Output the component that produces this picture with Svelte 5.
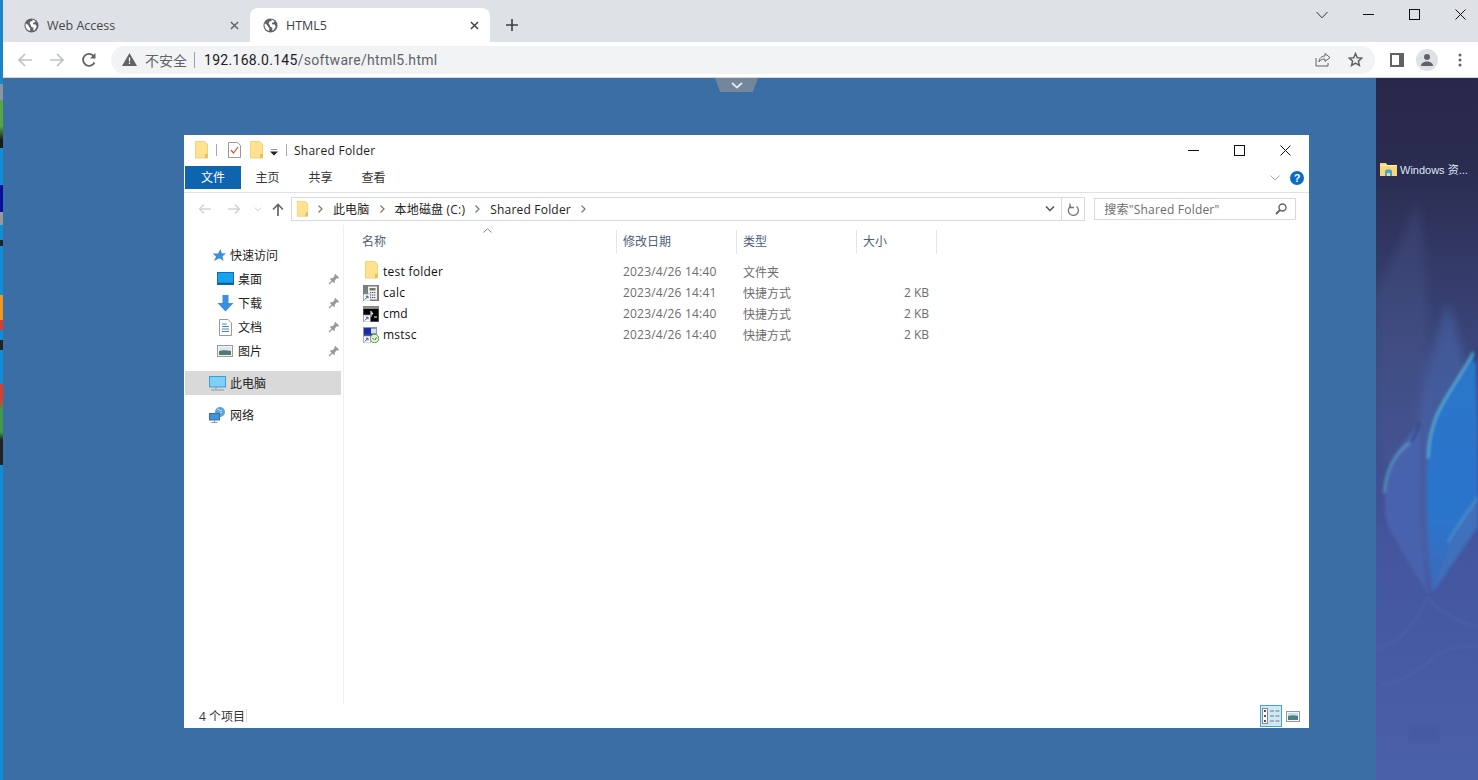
<script lang="ts">
  const navItems = [
    { key: 'desktop', label: '桌面' },
    { key: 'download', label: '下载' },
    { key: 'docs', label: '文档' },
    { key: 'pics', label: '图片' },
  ];

  const files = [
    { icon: 'folder', name: 'test folder', date: '2023/4/26 14:40', type: '文件夹', size: '' },
    { icon: 'calc', name: 'calc', date: '2023/4/26 14:41', type: '快捷方式', size: '2 KB' },
    { icon: 'cmd', name: 'cmd', date: '2023/4/26 14:40', type: '快捷方式', size: '2 KB' },
    { icon: 'mstsc', name: 'mstsc', date: '2023/4/26 14:40', type: '快捷方式', size: '2 KB' },
  ];

  const columns = [
    { label: '名称', width: 261 },
    { label: '修改日期', width: 120 },
    { label: '类型', width: 120 },
    { label: '大小', width: 80 },
  ];

  const crumbs = ['此电脑', '本地磁盘 (C:)', 'Shared Folder'];
</script>

{#snippet globe()}
  <svg class="globe" viewBox="0 0 16 16">
    <circle cx="8" cy="8" r="7.500" fill="#5f6368" />
    <path d="M2 5.500 5 8l.3 1.600 1.400.8-.2 3.400C4 13.400 1.800 11 1.600 8c0-.9.1-1.700.4-2.500zM9 1.700l3.300 1.500-1 1.600-1.600.2-.2 1.600 3 .4 1 2.400-2 3.400-1.700.6.300-3-2.300-1.200-.7-2L6 6l.6-2.300L9 3.500z" fill="#fff" />
  </svg>
{/snippet}

{#snippet folder(w = 13, h = 18)}
  <svg width={w} height={h} viewBox="0 0 13 18">
    <path d="M.5.500h9l3 2.500v14H.5z" fill="#ffe28f" stroke="#efd27a" />
    <path d="M10 13h2.500v4H10z" fill="#e5bf55" />
  </svg>
{/snippet}

{#snippet pin()}
  <svg class="pin" width="12" height="12" viewBox="0 0 12 12">
    <path d="M7.200.8 11.200 4.800 10 5.600 9 5.300 6.800 7.500 6.800 9.600 5.800 10 2 6.200 2.400 5.200 4.500 5.200 6.700 3 6.400 2z" fill="#9a9a9a" />
    <path d="M4 8 1 11" stroke="#9a9a9a" stroke-width="1.200" />
  </svg>
{/snippet}

{#snippet shortcut()}
  <rect x=".3" y="9" width="7" height="7" fill="#fff" stroke="#8a8a8a" stroke-width=".6" />
  <path d="M1.800 14.500 4.500 11.800M2.800 11.200h2.200v2.200" stroke="#1f4fa8" stroke-width="1" fill="none" />
{/snippet}

{#snippet fileIcon(kind: string)}
  {#if kind === 'folder'}
    <span class="file-folder">{@render folder(13, 18)}</span>
  {:else if kind === 'calc'}
    <svg width="16" height="16" viewBox="0 0 16 16">
      <rect width="16" height="16" fill="#7d7d7d" />
      <rect x="5" y="1.500" width="9" height="13" fill="#f2f2f2" />
      <rect x="6.500" y="3" width="6" height="2.500" fill="#777" />
      <path d="M7 7.500h1.300M9 7.500h1.300M11 7.500h1.300M7 10h1.300M9 10h1.300M11 10h1.300M7 12.500h1.300M9 12.500h1.300M11 12.500h1.300" stroke="#555" />
      {@render shortcut()}
    </svg>
  {:else if kind === 'cmd'}
    <svg width="16" height="16" viewBox="0 0 16 16">
      <rect width="16" height="16" fill="#8a8a8a" />
      <rect x=".5" y="3" width="15" height="12.500" fill="#050505" />
      <path d="M8 5.500l2 2.500-2 0M8 5v6M11 11h3" stroke="#fff" stroke-width="1" fill="none" />
      {@render shortcut()}
    </svg>
  {:else}
    <svg width="16" height="16" viewBox="0 0 16 16">
      <rect width="14" height="13" fill="#8c98ad" />
      <rect x="1" y="1" width="7" height="6" fill="#1c2fa6" />
      <path d="M1 7h11v4H1z" fill="#30469e" />
      <path d="M8 2h5v4H8z" fill="#d8dfef" />
      <circle cx="11.500" cy="11.500" r="4.300" fill="#dff0d0" stroke="#4f9a3a" />
      <path d="M9.500 11l1.300 1.500M13.500 10.500 12 13" stroke="#2f7f2b" stroke-width="1" />
      {@render shortcut()}
    </svg>
  {/if}
{/snippet}

{#snippet navIcon(kind: string)}
  {#if kind === 'desktop'}
    <svg width="17" height="14" viewBox="0 0 17 14">
      <rect x=".5" y=".5" width="16" height="12" fill="#19a0ee" stroke="#0f6fb5" />
      <path d="M1 11.500h15" stroke="#0b5c97" stroke-width="1.500" />
    </svg>
  {:else if kind === 'download'}
    <svg width="17" height="17" viewBox="0 0 17 17">
      <path d="M5.500 0h6v8H16.500L8.500 16.500.5 8h5z" fill="#3c8fe0" />
    </svg>
  {:else if kind === 'docs'}
    <svg width="13" height="17" viewBox="0 0 13 17">
      <path d="M.5.500h8.500l3.500 3.500v12.500H.5z" fill="#fff" stroke="#9a9a9a" />
      <path d="M3 5h5M3 7.500h7M3 10h7M3 12.500h7" stroke="#4a86c8" />
    </svg>
  {:else}
    <svg width="16" height="12" viewBox="0 0 16 12">
      <rect x=".5" y=".5" width="15" height="11" fill="#f4f4f4" stroke="#9c9c9c" />
      <rect x="2" y="2" width="12" height="4" fill="#dbe9ee" />
      <path d="M2 6c3-1 8-1 12 0v4H2z" fill="#527a72" />
    </svg>
  {/if}
{/snippet}

<div class="page">
  <div class="edge"></div>
  <div class="browser">
    <header class="tabstrip">
      <div class="tab">
        {@render globe()}
        <span class="tab-title">Web Access</span>
        <svg class="tab-close" viewBox="0 0 10 10"><path d="M1 1l8 8M9 1 1 9" stroke="#5f6368" stroke-width="1.600" /></svg>
      </div>
      <div class="tab active">
        {@render globe()}
        <span class="tab-title">HTML5</span>
        <svg class="tab-close" viewBox="0 0 10 10"><path d="M1 1l8 8M9 1 1 9" stroke="#3c4043" stroke-width="1.600" /></svg>
      </div>
      <svg class="new-tab" viewBox="0 0 12 12"><path d="M6 0v12M0 6h12" stroke="#3c4043" stroke-width="1.600" /></svg>
      <div class="win-controls">
        <svg width="12" height="8" viewBox="0 0 12 8"><path d="M.5 1 6 6.800 11.500 1" stroke="#333" fill="none" /></svg>
        <svg width="11" height="11" viewBox="0 0 11 11"><path d="M0 5.500h11" stroke="#111" /></svg>
        <svg width="11" height="11" viewBox="0 0 11 11"><rect x=".5" y=".5" width="10" height="10" stroke="#111" fill="none" /></svg>
        <svg width="11" height="11" viewBox="0 0 11 11"><path d="M.5.500l10 10M10.500.500l-10 10" stroke="#111" /></svg>
      </div>
    </header>

    <div class="toolbar">
      <svg class="tb-icon" viewBox="0 0 16 16"><path d="M15 8H2M8 2 2 8l6 6" stroke="#bdc1c6" stroke-width="1.700" fill="none" /></svg>
      <svg class="tb-icon" viewBox="0 0 16 16"><path d="M1 8h13M8 2l6 6-6 6" stroke="#bdc1c6" stroke-width="1.700" fill="none" /></svg>
      <svg class="tb-icon" viewBox="0 0 16 16"><path d="M13.500 10.500A6 6 0 1 1 13 4.500" stroke="#5f6368" stroke-width="1.800" fill="none" /><path d="M14.500 1v5.500H9z" fill="#5f6368" /></svg>
      <div class="omnibox">
        <svg width="15" height="13" viewBox="0 0 15 13"><path d="M7.500 0 15 13H0z" fill="#5f6368" /><path d="M7.500 4.500v4M7.500 9.500v1.500" stroke="#fff" stroke-width="1.300" /></svg>
        <span class="insecure">不安全</span>
        <span class="sep"></span>
        <span class="url">192.168.0.145<span class="url-path">/software/html5.html</span></span>
        <span class="spacer"></span>
        <svg class="omni-share" width="16" height="15" viewBox="0 0 16 15"><path d="M1 6v8h12v-3" stroke="#5f6368" fill="none" /><path d="M4 10c0-4 3-6 6-6V1.500l5 4-5 4V7c-3 0-5 1-6 3z" stroke="#5f6368" fill="none" /></svg>
        <svg class="omni-star" width="15" height="15" viewBox="0 0 15 15"><path d="M7.500 1.500 9.300 5.700l4.500.4-3.400 3 1 4.400-3.900-2.300-3.900 2.300 1-4.400-3.400-3 4.500-.4z" stroke="#5f6368" stroke-width="1.500" fill="none" /></svg>
      </div>
      <div class="tb-right">
        <svg width="14" height="14" viewBox="0 0 14 14"><rect width="14" height="14" fill="#5f6368" /><rect x="2" y="2" width="7" height="10" fill="#fff" /></svg>
        <span class="avatar"><svg width="14" height="14" viewBox="0 0 14 14"><circle cx="7" cy="4" r="3" fill="#5f6368" /><path d="M1 13c0-3 3-4.500 6-4.500s6 1.500 6 4.500z" fill="#5f6368" /></svg></span>
        <svg width="4" height="14" viewBox="0 0 4 14"><circle cx="2" cy="2" r="1.500" fill="#5f6368" /><circle cx="2" cy="7" r="1.500" fill="#5f6368" /><circle cx="2" cy="12" r="1.500" fill="#5f6368" /></svg>
      </div>
    </div>

    <main class="remote">
      <div class="handle">
        <svg width="12" height="7" viewBox="0 0 12 7"><path d="M1 1l5 4.500L11 1" stroke="#dfe7f0" stroke-width="1.800" fill="none" /></svg>
      </div>

      <section class="explorer">
        <div class="titlebar">
          {@render folder(13, 18)}
          <span class="qa-sep"></span>
          <svg width="13" height="16" viewBox="0 0 13 16"><path d="M.5.500h9l3 3v12H.5z" fill="#fff" stroke="#999" /><path d="M3 8l2.500 3L10 5" stroke="#d9532c" stroke-width="1.200" fill="none" /></svg>
          <span class="qa-folder">{@render folder(13, 18)}</span>
          <svg class="qa-drop" width="8" height="7" viewBox="0 0 8 7"><path d="M1 0h6" stroke="#222" /><path d="M0 2.500h8L4 6.500z" fill="#222" /></svg>
          <span class="qa-sep"></span>
          <span class="win-title">Shared Folder</span>
          <div class="ex-controls">
            <svg width="11" height="11" viewBox="0 0 11 11"><path d="M0 5.500h11" stroke="#111" /></svg>
            <svg width="11" height="11" viewBox="0 0 11 11"><rect x=".5" y=".5" width="10" height="10" stroke="#111" fill="none" /></svg>
            <svg width="11" height="11" viewBox="0 0 11 11"><path d="M.5.500l10 10M10.500.500l-10 10" stroke="#111" /></svg>
          </div>
        </div>

        <div class="ribbon">
          <span class="rib-tab file">文件</span>
          <span class="rib-tab">主页</span>
          <span class="rib-tab">共享</span>
          <span class="rib-tab">查看</span>
          <span class="spacer"></span>
          <svg width="10" height="6" viewBox="0 0 10 6"><path d="M.5.500 5 5 9.500.500" stroke="#aaa" fill="none" /></svg>
          <span class="help">?</span>
        </div>

        <div class="addrrow">
          <svg class="ar" width="14" height="12" viewBox="0 0 14 12"><path d="M13 6H2M6 1.500 1.500 6 6 10.500" stroke="#d4d4d4" stroke-width="1.500" fill="none" /></svg>
          <svg class="ar" width="14" height="12" viewBox="0 0 14 12"><path d="M1 6h11M8 1.500 12.500 6 8 10.500" stroke="#d4d4d4" stroke-width="1.500" fill="none" /></svg>
          <svg class="ar small" width="8" height="5" viewBox="0 0 8 5"><path d="M.5.500 4 4 7.500.500" stroke="#d4d4d4" fill="none" /></svg>
          <svg class="ar" width="12" height="13" viewBox="0 0 12 13"><path d="M6 13V2M1 6.500 6 1.500l5 5" stroke="#666" stroke-width="1.700" fill="none" /></svg>
          <div class="addrbox">
            <span class="addr-folder">{@render folder(13, 18)}</span>
            {#each crumbs as crumb}
              <svg class="crumb-arrow" width="5" height="8" viewBox="0 0 5 8"><path d="M.5.500 4 4 .5 7.500" stroke="#777" stroke-width="1.200" fill="none" /></svg>
              <span class="crumb">{crumb}</span>
            {/each}
            <svg class="crumb-arrow" width="5" height="8" viewBox="0 0 5 8"><path d="M.5.500 4 4 .5 7.500" stroke="#777" stroke-width="1.200" fill="none" /></svg>
            <span class="spacer"></span>
            <svg class="addr-drop" width="10" height="6" viewBox="0 0 10 6"><path d="M1 .500 5 4.500 9 .500" stroke="#555" stroke-width="1.500" fill="none" /></svg>
            <span class="refresh">
              <svg width="12" height="13" viewBox="0 0 12 13"><path d="M9.500 3.500A5 5 0 1 1 4 3" stroke="#777" stroke-width="1.300" fill="none" /><path d="M3 .500v4h4" stroke="#777" stroke-width="1.300" fill="none" /></svg>
            </span>
          </div>
          <div class="searchbox">
            <span>搜索"Shared Folder"</span>
            <svg width="12" height="12" viewBox="0 0 12 12"><circle cx="7.500" cy="4.500" r="3.500" stroke="#666" stroke-width="1.400" fill="none" /><path d="M5 7 1 11" stroke="#666" stroke-width="2" /></svg>
          </div>
        </div>

        <div class="body">
          <nav class="navpane">
            <div class="nav-row top">
              <svg class="star" width="14" height="14" viewBox="0 0 14 14"><path d="M8.500 1 9.700 5.300 14 5.500 10.500 8.300 11.500 13 7.500 10.300 2 13 4 8.500 .500 5.500 6 5.500z" fill="#3b8fd6" /></svg>
              <span>快速访问</span>
            </div>
            {#each navItems as item}
              <div class="nav-row sub">
                <span class="nav-ico">{@render navIcon(item.key)}</span>
                <span>{item.label}</span>
                <span class="spacer"></span>
                {@render pin()}
              </div>
            {/each}
            <div class="nav-row top selected">
              <svg width="17" height="15" viewBox="0 0 17 15"><rect x=".5" y=".5" width="16" height="10.500" fill="#7fd0f5" stroke="#3b9ed6" /><path d="M7 11v2M2 14h13" stroke="#8a97a5" stroke-width="1.200" /></svg>
              <span>此电脑</span>
            </div>
            <div class="nav-row top net">
              <svg width="17" height="16" viewBox="0 0 17 16"><circle cx="11" cy="5" r="5" fill="#5ea4d8" /><path d="M8 2c2 .5 3 2 5 1.500M9 8c1-2 3-2 4-3" stroke="#c4e3f6" fill="none" /><rect x=".5" y="6.500" width="10" height="6.500" fill="#3f93d8" stroke="#2b74b0" /><path d="M5.500 13v2M2.500 15.500h6" stroke="#8a97a5" /></svg>
              <span>网络</span>
            </div>
          </nav>

          <div class="listpane">
            <svg class="sort" width="9" height="5" viewBox="0 0 9 5"><path d="M.5 4.500 4.500.700l4 3.800" stroke="#888" fill="none" /></svg>
            <div class="colhead">
              {#each columns as col}
                <span class="col" style:width="{col.width}px">{col.label}</span>
              {/each}
            </div>
            <div class="rows">
              {#each files as file}
                <div class="row">
                  <span class="cell name">
                    <span class="file-ico">{@render fileIcon(file.icon)}</span>
                    {file.name}
                  </span>
                  <span class="cell meta latin">{file.date}</span>
                  <span class="cell meta">{file.type}</span>
                  <span class="cell meta size">{file.size}</span>
                </div>
              {/each}
            </div>
          </div>
        </div>

        <footer class="status">
          <span class="count">4 个项目</span>
          <span class="status-sep"></span>
          <span class="spacer"></span>
          <span class="view on">
            <svg width="18" height="16" viewBox="0 0 18 16">
              <rect x=".5" y=".5" width="5" height="15" fill="#fff" stroke="#888" />
              <path d="M2 3h2M2 8h2M2 13h2" stroke="#555" stroke-width="2" />
              <path d="M8 3h4M13.500 3h4M8 8h4M13.500 8h4M8 13h4M13.500 13h4" stroke="#777" />
            </svg>
          </span>
          <span class="view">
            <svg width="14" height="11" viewBox="0 0 14 11"><rect x=".5" y=".5" width="13" height="10" fill="#f4f4f4" stroke="#999" /><rect x="2" y="2" width="10" height="3" fill="#bfe0f2" /><path d="M2 5c3-1 7-1 10 0v4H2z" fill="#4f7f80" /></svg>
          </span>
        </footer>
      </section>

      <aside class="wallpaper">
        <svg class="flames" viewBox="0 0 102 701" preserveAspectRatio="none">
          <defs>
            <linearGradient id="fl" x1="0" y1="0" x2="0" y2="1">
              <stop offset="0" stop-color="#2a76c8" />
              <stop offset=".7" stop-color="#2c74cc" />
              <stop offset="1" stop-color="#3e68b8" />
            </linearGradient>
            <filter id="soft"><feGaussianBlur stdDeviation="1.500" /></filter>
            <filter id="softer"><feGaussianBlur stdDeviation="5" /></filter>
          </defs>
          <g filter="url(#softer)">
            <path d="M41 121C30 160 10 190 0 215v140c14 40 32 90 46 130 4-90 8-190 6-250C51 190 46 150 41 121z" fill="#57699f" opacity=".22" />
            <path d="M72 224C60 260 46 300 44 344c-2 60 2 120 8 170 10-50 22-90 50-130V330C92 290 80 250 72 224z" fill="#4f74c2" opacity=".42" />
          </g>
          <g filter="url(#soft)">
            <path d="M43 344C34 358 20 368 14 390 6 415 6 445 20 461c10 20 22 38 32 53-6-40-10-80-8-110 0-20 2-40-1-60z" fill="#4a62ad" />
            <path d="M100 271C85 300 70 315 60 340c-8 20-10 50-9 75 0 35 3 70 5 99 8-20 22-40 46-96z" fill="url(#fl)" />
            <path d="M57 514c8-30 24-68 45-96v30c-16 24-32 46-45 66z" fill="#3f6fbc" />
            <path d="M97 274C85 298 70 315 60 338c-6 16-8 28-8 42" stroke="#5fc0dc" stroke-width="2.200" fill="none" opacity=".85" />
            <path d="M100 270l-2 14" stroke="#23406f" stroke-width="2" />
            <path d="M34 364c-8 6-14 12-19 22-4 8-6 18-7 28" stroke="#5ec0d4" stroke-width="1.800" fill="none" opacity=".7" />
            <path d="M43 344c-1 8-4 14-8 20" stroke="#2c4478" stroke-width="2" fill="none" />
            <path d="M102 418C92 434 80 448 72 464" stroke="#66b8cc" stroke-width="1.500" fill="none" opacity=".6" />
          </g>
          <path d="M0 570c18-5 36-15 51-52M5 606c20-2 40-15 55-30 12-6 26-10 42-8M52 518c10 15 30 25 50 30" stroke="#6a7fb8" stroke-width="1.500" fill="none" opacity=".25" filter="url(#soft)" />
          <rect x="32" y="646" width="32" height="18" fill="#44579a" opacity=".4" filter="url(#soft)" />
        </svg>
        <div class="desk-label">
          <svg width="17" height="14" viewBox="0 0 17 14"><path d="M0 1h6l1.500 2H17v11H0z" fill="#f8d775" /><path d="M0 3.500h17" stroke="#fff3c4" /><path d="M5 14V9.500C5 8 6 7.500 8.500 7.500s3.500.5 3.500 2V14h-2v-3H7v3z" fill="#3fa7d6" /></svg>
          <span>Windows 资...</span>
        </div>
      </aside>
    </main>
  </div>
</div>

<style>
  :global(body) {
    margin: 0;
    overflow: hidden;
  }
  .page {
    display: flex;
    width: 1478px;
    height: 780px;
    font-family: "Open Sans", "Noto Sans CJK SC", sans-serif;
    font-size: 12px;
    color: #1e1e1e;
    overflow: hidden;
  }
  .edge {
    width: 3px;
    flex: none;
    background: linear-gradient(
      to bottom,
      #1a84c9 0 84px,
      #8a95a3 84px 100px,
      #57a83c 100px 126px,
      #1a1a1a 140px 148px,
      #0f8ed8 148px 185px,
      #08109a 185px 212px,
      #999 212px 225px,
      #0f8ed8 225px 240px,
      #222 240px 246px,
      #0f8ed8 246px 295px,
      #f0961c 295px 320px,
      #d8402c 320px 330px,
      #0f8ed8 330px 340px,
      #222 340px 350px,
      #0f8ed8 350px 384px,
      #d8402c 384px 400px,
      #3f9a46 410px 432px,
      #222 440px 465px,
      #0f8ed8 465px 780px
    );
  }
  .browser {
    flex: 1;
    display: flex;
    flex-direction: column;
    min-width: 0;
  }
  .spacer {
    flex: 1;
  }

  .tabstrip {
    height: 42px;
    flex: none;
    display: flex;
    align-items: flex-end;
    background: #dee1e6;
    padding-left: 7px;
  }
  .tab {
    width: 240px;
    height: 34px;
    box-sizing: border-box;
    display: flex;
    align-items: center;
    padding: 0 10px 0 14px;
    color: #45484c;
    font-size: 12.5px;
  }
  .tab.active {
    background: #fff;
    border-radius: 8px 8px 0 0;
    color: #3c4043;
    padding-left: 13px;
  }
  .globe {
    width: 15px;
    height: 15px;
    flex: none;
  }
  .tab-title {
    flex: 1;
    margin-left: 8px;
  }
  .tab-close {
    width: 9px;
    height: 9px;
    margin-right: 1px;
  }
  .new-tab {
    width: 12px;
    height: 12px;
    margin: 0 0 11px 16px;
  }
  .win-controls {
    margin-left: auto;
    align-self: flex-start;
    display: flex;
    align-items: center;
    gap: 35px;
    padding: 9px 12px 0 0;
  }

  .toolbar {
    height: 36px;
    flex: none;
    box-sizing: border-box;
    display: flex;
    align-items: center;
    background: #fff;
    padding-left: 14px;
    border-bottom: 1px solid #d4d6da;
  }
  .tb-icon {
    width: 16px;
    height: 16px;
    margin-right: 16px;
  }
  .tb-icon:nth-child(3) {
    margin-right: 14px;
  }
  .omnibox {
    width: 1264px;
    height: 28px;
    display: flex;
    align-items: center;
    box-sizing: border-box;
    padding: 0 9px 0 11px;
    border-radius: 14px;
    background: #f1f3f4;
    font-size: 14px;
  }
  .insecure {
    margin-left: 8px;
    font-size: 14px;
    color: #5f6368;
  }
  .sep {
    width: 1px;
    height: 16px;
    background: #9aa0a6;
    margin: 0 9px 0 7px;
  }
  .url {
    color: #202124;
    font-family: Roboto, sans-serif;
    font-size: 14px;
    letter-spacing: .3px;
  }
  .url-path {
    color: #5f6368;
  }
  .omni-share {
    margin-right: 17px;
  }
  .omni-star {
    margin-right: 3px;
  }
  .tb-right {
    display: flex;
    align-items: center;
    margin-left: 15px;
  }
  .avatar {
    width: 22px;
    height: 22px;
    margin: 0 20px 0 12px;
    border-radius: 50%;
    background: #dee1e6;
    display: flex;
    align-items: center;
    justify-content: center;
  }

  .remote {
    position: relative;
    flex: 1;
    display: flex;
    background: #3a6ea5;
    min-height: 0;
  }
  .handle {
    position: absolute;
    left: 712px;
    top: 0;
    width: 43px;
    height: 14px;
    background: #75869b;
    clip-path: polygon(0 0, 100% 0, 88% 100%, 12% 100%);
    display: flex;
    align-items: center;
    justify-content: center;
  }
  .explorer {
    width: 1125px;
    height: 593px;
    margin: 57px 67px 0 181px;
    flex: none;
    display: flex;
    flex-direction: column;
    background: #fff;
  }
  .titlebar {
    height: 30px;
    display: flex;
    align-items: center;
    padding-left: 11px;
    flex: none;
  }
  .qa-sep {
    width: 1px;
    height: 12px;
    background: #a8a8a8;
    margin: 0 11px 0 8px;
  }
  .qa-folder {
    margin-left: 9px;
    display: flex;
  }
  .qa-drop {
    margin-left: 7px;
    margin-top: 4px;
  }
  .qa-drop + .qa-sep {
    margin: 0 7px 0 8px;
  }
  .win-title {
    font-size: 12px;
    letter-spacing: .25px;
  }
  .ex-controls {
    margin-left: auto;
    display: flex;
    align-items: center;
    gap: 35px;
    padding-right: 18px;
  }
  .ribbon {
    height: 28px;
    flex: none;
    box-sizing: border-box;
    display: flex;
    align-items: center;
    padding: 1px 5px 3px 1px;
    border-bottom: 1px solid #e1e1e1;
  }
  .rib-tab {
    width: 53px;
    text-align: center;
    font-size: 12px;
    color: #333;
    line-height: 23px;
  }
  .rib-tab.file {
    width: 56px;
    background: #0f64b0;
    color: #fff;
  }
  .help {
    width: 14px;
    height: 14px;
    margin-left: 10px;
    border-radius: 50%;
    background: #0a6cc4;
    color: #fff;
    font: 700 11px/14px "Liberation Sans", sans-serif;
    text-align: center;
  }
  .addrrow {
    height: 32px;
    flex: none;
    display: flex;
    align-items: center;
    padding: 0 13px 0 14px;
    box-sizing: border-box;
  }
  .ar {
    margin-right: 15px;
  }
  .ar.small {
    margin-right: 10px;
    margin-left: -2px;
  }
  .ar:nth-child(4) {
    margin-right: 7px;
  }
  .addrbox {
    width: 796px;
    height: 24px;
    box-sizing: border-box;
    border: 1px solid #d9d9d9;
    display: flex;
    align-items: center;
    padding-left: 4px;
    color: #222;
  }
  .addr-folder {
    display: flex;
    margin-right: 9px;
    transform: scale(.9);
  }
  .crumb {
    margin: 0 10px 0 10px;
    letter-spacing: .2px;
  }
  .crumb-arrow {
    flex: none;
  }
  .addr-drop {
    margin-right: 6px;
  }
  .refresh {
    width: 22px;
    height: 100%;
    border-left: 1px solid #d9d9d9;
    display: flex;
    align-items: center;
    justify-content: center;
  }
  .searchbox {
    width: 202px;
    height: 22px;
    margin-left: 9px;
    box-sizing: border-box;
    border: 1px solid #d9d9d9;
    display: flex;
    align-items: center;
    justify-content: space-between;
    padding: 0 8px 0 9px;
    color: #6d6d6d;
    letter-spacing: .2px;
  }

  .body {
    flex: 1;
    display: flex;
    min-height: 0;
  }
  .navpane {
    width: 159px;
    margin-left: 1px;
    flex: none;
    box-sizing: border-box;
    padding-top: 18px;
    border-right: 1px solid #f0f0f0;
  }
  .nav-row {
    height: 24px;
    width: 156px;
    display: flex;
    align-items: center;
    font-size: 12px;
    color: #222;
  }
  .nav-row.top {
    padding-left: 24px;
    box-sizing: border-box;
    gap: 4px;
  }
  .star {
    margin-left: 3px;
  }
  .nav-row.sub {
    padding: 0 1px 0 29px;
    box-sizing: border-box;
  }
  .nav-ico {
    width: 22px;
    display: flex;
    justify-content: center;
    margin-right: 2px;
  }
  .nav-row.selected {
    margin-top: 8px;
    background: #d9d9d9;
  }
  .nav-row.net {
    margin-top: 8px;
  }
  .listpane {
    position: relative;
    flex: 1;
    min-width: 0;
    padding-left: 12px;
  }
  .sort {
    position: absolute;
    left: 139px;
    top: 3px;
  }
  .colhead {
    display: flex;
    height: 24px;
    padding-top: 5px;
  }
  .col {
    box-sizing: border-box;
    padding-left: 6px;
    line-height: 24px;
    color: #4c607a;
    border-right: 1px solid #e5e5e5;
  }
  .rows {
    padding-top: 7px;
  }
  .row {
    display: flex;
    height: 21px;
    align-items: center;
  }
  .cell {
    width: 120px;
    box-sizing: border-box;
    padding-left: 6px;
  }
  .cell.latin {
    letter-spacing: .2px;
  }
  .cell.name {
    width: 261px;
    display: flex;
    align-items: center;
    padding-left: 7px;
    color: #111;
    font-size: 12px;
    letter-spacing: .25px;
  }
  .file-ico {
    width: 16px;
    height: 16px;
    display: flex;
    align-items: center;
    justify-content: center;
    margin-right: 4px;
  }
  .meta {
    color: #6d6d6d;
  }
  .cell.size {
    width: 80px;
    text-align: right;
    padding-right: 8px;
  }
  .status {
    height: 24px;
    flex: none;
    display: flex;
    align-items: center;
    padding: 0 5px 0 15px;
    box-sizing: border-box;
  }
  .count {
    color: #333;
  }
  .status-sep {
    width: 1px;
    height: 14px;
    background: #e0e0e0;
    margin-left: 1px;
  }
  .view {
    width: 22px;
    height: 22px;
    box-sizing: border-box;
    display: flex;
    align-items: center;
    justify-content: center;
  }
  .view.on {
    background: #cde8f7;
    border: 1px solid #4aa3d4;
  }

  .wallpaper {
    position: relative;
    flex: 1;
    background: linear-gradient(to bottom, #28284a 0, #2a2c50 90px, #3a4478 260px, #43569f 480px, #4a60a8 700px);
  }
  .flames {
    position: absolute;
    inset: 0;
    width: 100%;
    height: 100%;
  }
  .desk-label {
    position: absolute;
    left: 4px;
    top: 83px;
    display: flex;
    align-items: center;
    gap: 3px;
    color: #dfe6f5;
    font-family: "Liberation Sans", "Noto Sans CJK SC", sans-serif;
    font-size: 11px;
    white-space: nowrap;
  }
</style>
